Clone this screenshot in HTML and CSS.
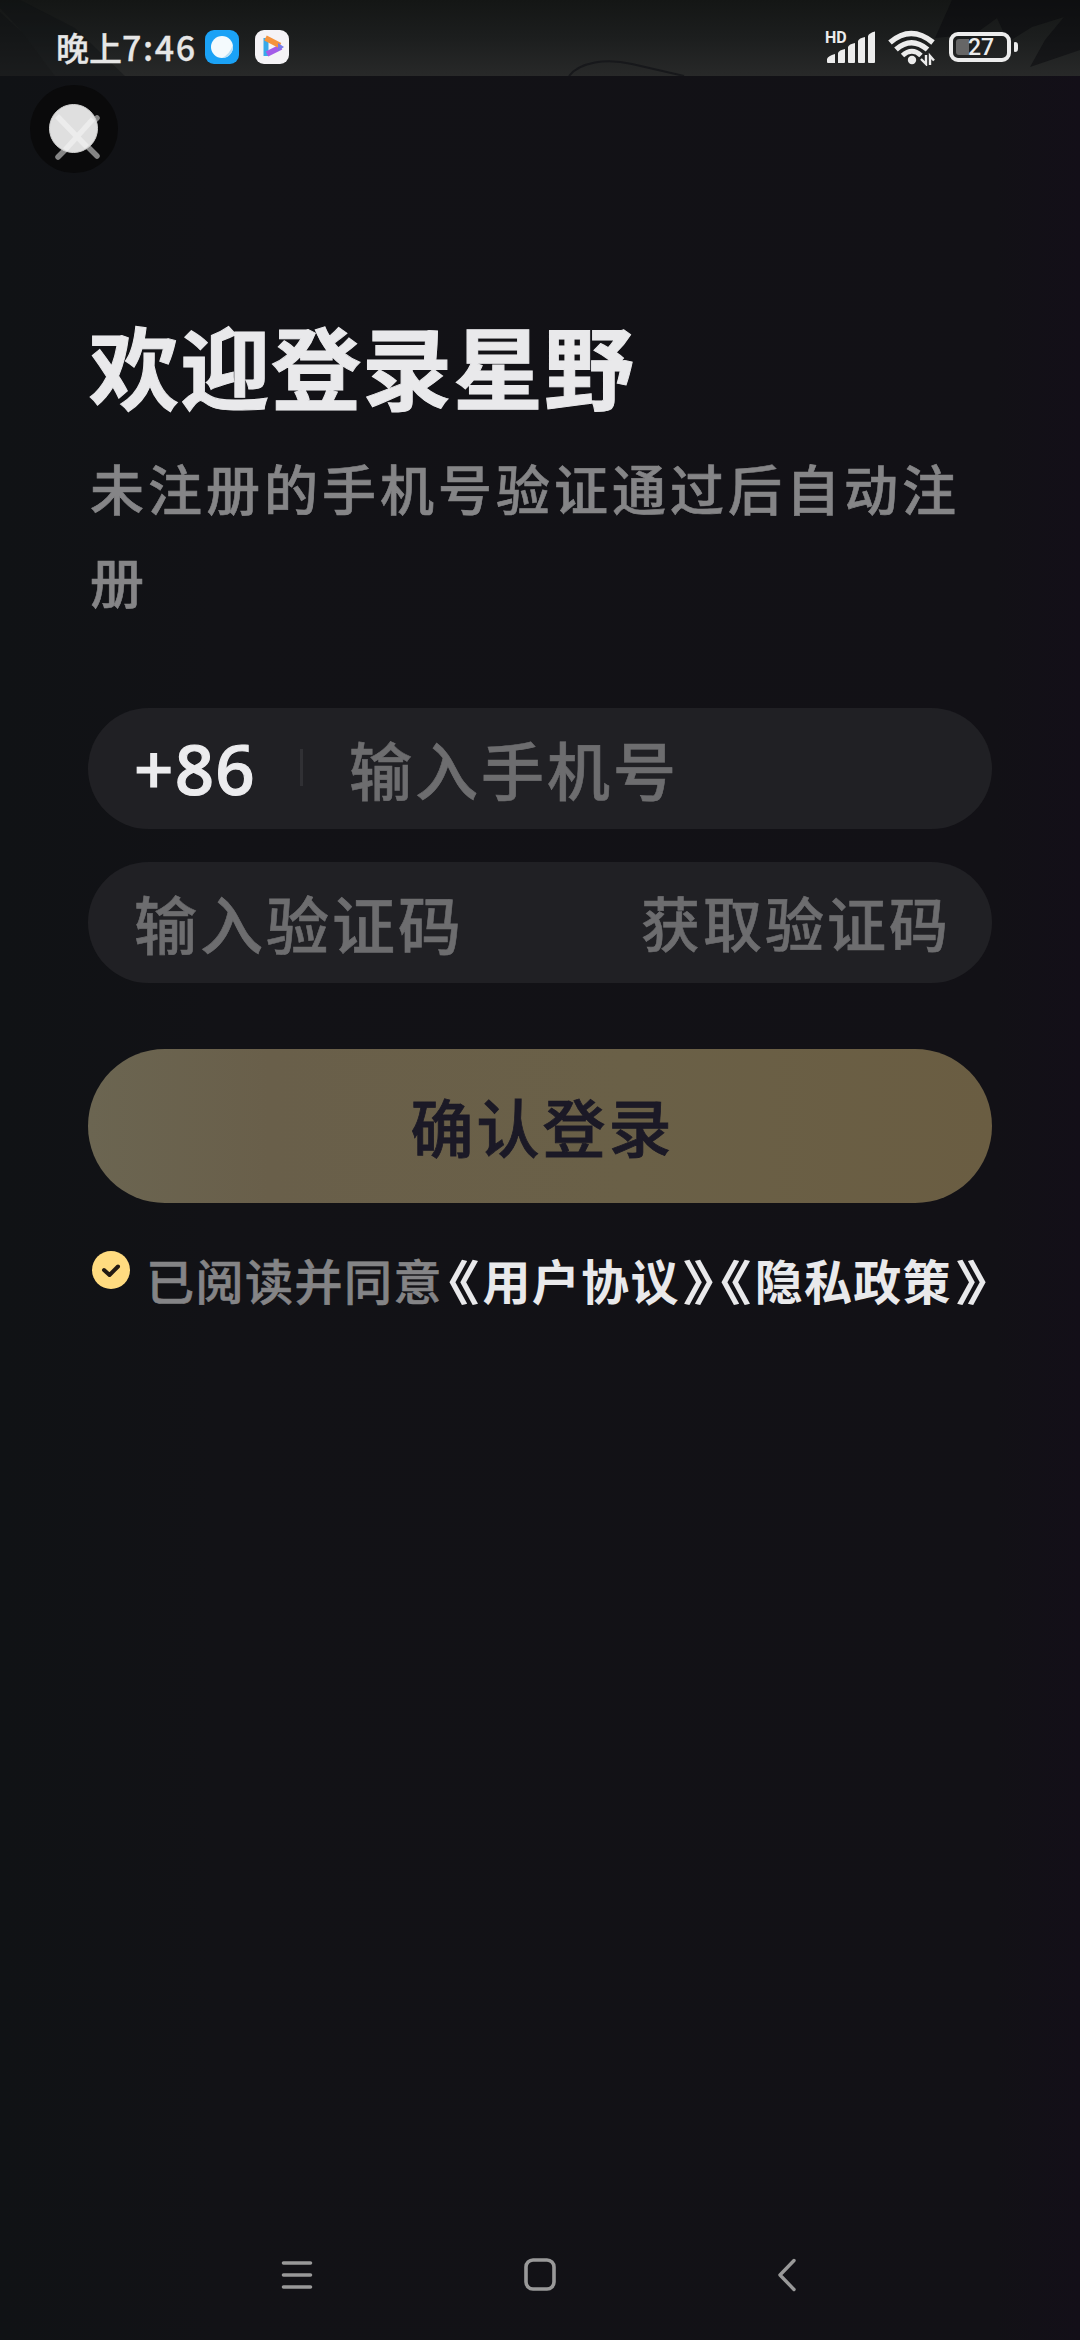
FILE: index.html
```html
<!DOCTYPE html>
<html lang="zh-CN">
<head>
<meta charset="utf-8">
<title>登录</title>
<link rel="stylesheet" href="styles.css">
</head>
<body>
<div class="screen">
  <header class="status">
    <svg class="status-art" width="1080" height="76" viewBox="0 0 1080 76" aria-hidden="true">
      <path d="M0 0H20L75 28L125 76H55L22 32L0 8Z" fill="#0c0d10" opacity=".35"/>
      <path d="M0 12L22 32L55 76H0Z" fill="#0e0f12" opacity=".5"/>
      <path d="M952 0H1080V50L1030 67L1045 40L1064 17L1032 27L1008 42L997 18L975 34L935 38Z" fill="#07080c" opacity=".5"/>
      <path d="M569 76C580 62 606 58 632 64L684 76" fill="none" stroke="#17181b" stroke-width="2"/>
    </svg>
    <span class="time">晚上<span class="digits">7:46</span></span>
    <svg class="app" width="34" height="34" viewBox="0 0 34 34">
      <rect width="34" height="34" rx="9" fill="#1ba2f6"/>
      <circle cx="17" cy="17" r="11" fill="#f4fafd"/>
      <path d="M27.800 15A11 11 0 0 1 17 28Q25 24 27.800 15Z" fill="#b9dff4"/>
    </svg>
    <svg class="app app-video" width="34" height="34" viewBox="0 0 34 34">
      <rect width="34" height="34" rx="9" fill="#f5f3f6"/>
      <path d="M11 8V26" stroke="#38a9ea" stroke-width="5"/>
      <path d="M12 24L26 17" stroke="#a45be8" stroke-width="5.500" stroke-linejoin="round"/>
      <path d="M10.500 8L25 15.500" stroke="#f5933d" stroke-width="5.500"/>
      <path d="M23 13L29 17L23 21Z" fill="#7778e8"/>
    </svg>
    <span class="spacer"></span>
    <span class="signal">
      <span class="hd">HD</span>
      <svg width="51" height="34" viewBox="0 0 51 34" fill="#ececec">
        <path d="M2 33V29Q3 26 10 24V33Q10 33 9 33H3Q2 33 2 32Z"/>
        <path d="M13 33V23Q14 20 20 19V32Q20 33 19 33Z"/>
        <path d="M23 32V17Q24 14 30 13V32Q30 33 29 33H24Q23 33 23 32Z"/>
        <path d="M33 32V11Q34 8 40 7V32Q40 33 39 33H34Q33 33 33 32Z"/>
        <path d="M43 32V6Q44 3 50 1.500V32Q50 33 49 33H44Q43 33 43 32Z"/>
      </svg>
    </span>
    <svg class="wifi" width="48" height="36" viewBox="0 0 48 36" fill="none" stroke="#ececec" stroke-width="5.500">
      <path d="M2 12.500Q23 -5.500 45 12.500"/>
      <path d="M8 19.500Q23.500 6 39.500 19.500"/>
      <path d="M14.500 25.500Q24 17 33 25.500" stroke-width="5"/>
      <circle cx="24" cy="30" r="4.200" fill="#ececec" stroke="none"/>
      <path d="M38 25V34L33 29M42 35V26L46 30.500" stroke-width="2.400"/>
    </svg>
    <span class="battery"><span class="battery-body"><span class="charge"></span><span class="percent">27</span></span><span class="battery-tip"></span></span>
  </header>

  <button class="close" aria-label="关闭">
    <svg width="88" height="88" viewBox="0 0 88 88">
      <path d="M28 32L67 71M67 33L28 72" stroke="#858585" stroke-width="5.500" stroke-linecap="round"/>
      <circle cx="43.500" cy="43.500" r="24" fill="#dfdfdf"/>
      <path d="M27 31L57 62M63 34L35 65" stroke="#ececec" stroke-width="5.500"/>
      <circle cx="43.500" cy="43.500" r="24" fill="none" stroke="#d3d3d3"/>
    </svg>
  </button>

  <main class="login">
    <h1>欢迎登录星野</h1>
    <p class="hint">未注册的手机号验证通过后自动注册</p>
    <div class="field">
      <span class="prefix">+86</span><span class="divider"></span><span class="placeholder">输入手机号</span>
    </div>
    <div class="field">
      <span class="placeholder">输入验证码</span><span class="get-code">获取验证码</span>
    </div>
    <button class="submit">确认登录</button>
    <div class="agree">
      <svg class="check" width="38" height="38" viewBox="0 0 38 38">
        <circle cx="19" cy="19" r="19" fill="#ffdb80"/>
        <path d="M12 19L17.500 24L26 15.500" fill="none" stroke="#231a12" stroke-width="4" stroke-linecap="round" stroke-linejoin="round"/>
      </svg>
      <span class="agree-text">已阅读并同意</span><a class="link"><span class="mark"><span>《</span></span>用户协议<span class="mark"><span>》</span></span></a><a class="link"><span class="mark"><span>《</span></span>隐私政策<span class="mark"><span>》</span></span></a>
    </div>
  </main>

  <nav class="system-nav">
    <svg width="32" height="32" viewBox="0 0 32 32" fill="none" stroke="#999" stroke-width="3.600" stroke-linecap="round"><path d="M2.500 4H29.500M2.500 16H29.500M2.500 28H29.500"/></svg>
    <svg width="32" height="36" viewBox="0 0 32 36" fill="none" stroke="#999" stroke-width="3.600"><rect x="2" y="3" width="28" height="29" rx="7"/></svg>
    <svg width="20" height="34" viewBox="0 0 20 34" fill="none" stroke="#999" stroke-width="3.400" stroke-linecap="round" stroke-linejoin="round"><path d="M17 2.500L3 17L17 31.500"/></svg>
  </nav>
</div>
</body>
</html>
```
FILE: styles.css
```css
* { box-sizing: border-box; }
body {
  margin: 0;
  background: #121115;
  font-family: "Noto Sans CJK SC", sans-serif;
}
button { border: 0; padding: 0; font-family: inherit; }
.screen {
  width: 1080px;
  height: 2340px;
  display: flex;
  flex-direction: column;
  overflow: hidden;
  background: linear-gradient(90deg, #101215 0%, #121216 20%, #121116 92%, #130f18 100%);
}
.status {
  position: relative;
  flex: none;
  height: 76px;
  padding: 20px 62px 0 56px;
  display: flex;
  align-items: flex-start;
  background: linear-gradient(#141615, #1c1e1e 50%, #282929);
  color: #e6e6e6;
}
.status > * { position: relative; flex: none; }
.status > .status-art { position: absolute; left: 0; top: 0; }
.status > .spacer { flex: 1; }
.time {
  width: 149px;
  height: 56px;
  line-height: 54px;
  font-size: 33px;
  font-weight: 500;
  white-space: nowrap;
  -webkit-text-stroke: 0.300px currentColor;
}
.digits { font-size: 34px; letter-spacing: 1.600px; }
.app { margin-top: 10px; }
.app-video { margin-left: 16px; }
.signal { display: flex; width: 51px; margin-top: 10px; }
.hd {
  position: absolute;
  left: 0;
  top: -2px;
  font: 700 16px/20px Roboto, sans-serif;
  color: #ececec;
}
.wifi { margin: 10px 0 0 12px; }
.battery { display: flex; align-items: center; gap: 3px; margin: 12px 0 0 13px; }
.battery-body {
  width: 62px;
  height: 30px;
  padding-left: 3px;
  display: flex;
  align-items: center;
  border: 4px solid #ececec;
  border-radius: 9px;
}
.charge { width: 13px; height: 16px; border-radius: 3px 0 0 3px; background: #666; }
.percent { font: 500 23px/22px Roboto, sans-serif; color: #ececec; padding-top: 2px; margin-left: -1px; }
.battery-tip { width: 4px; height: 10px; border-radius: 1px 3px 3px 1px; background: #ececec; }
.close {
  flex: none;
  width: 88px;
  height: 88px;
  margin: 9px 0 0 30px;
  border-radius: 50%;
  background: #0a0a0b;
}
.close svg { display: block; }
.login {
  flex: 1;
  padding: 126px 88px 0;
  display: flex;
  flex-direction: column;
}
h1 {
  margin: 0 0 0 1px;
  font-size: 90px;
  line-height: 130px;
  font-weight: 700;
  letter-spacing: 1px;
  color: #e9e9eb;
  -webkit-text-stroke: 1px currentColor;
}
.hint {
  margin: 12px 0 0 2px;
  width: 890px;
  font-size: 54px;
  line-height: 93px;
  font-weight: 500;
  letter-spacing: 4px;
  color: #858587;
  -webkit-text-stroke: 0.600px currentColor;
}
.field {
  height: 121px;
  margin-bottom: 33px;
  padding: 0 41px 2px 46px;
  display: flex;
  align-items: center;
  border-radius: 61px;
  background: #202024;
  font-size: 63px;
  line-height: 119px;
  font-weight: 500;
  -webkit-text-stroke: 0.600px currentColor;
}
.hint + .field { margin-top: 81px; }
.prefix {
  width: 166px;
  padding-top: 2px;
  font-family: "Noto Sans", sans-serif;
  font-size: 69px;
  line-height: 117px;
  letter-spacing: 1.200px;
  color: #ececee;
  -webkit-text-stroke: 1.200px currentColor;
}
.divider { width: 3px; height: 37px; margin-right: 46px; background: #303034; }
.placeholder { letter-spacing: 3px; color: #6d6d6f; }
.get-code { margin-left: auto; font-size: 59px; letter-spacing: 3px; color: #6d6d6f; }
.submit {
  height: 154px;
  margin-top: 33px;
  padding: 0 0 3px 5px;
  border-radius: 77px;
  background: linear-gradient(90deg, #6b6551, #695f4a 20%, #6a6047 60%, #6a5d42);
  font-size: 63px;
  line-height: 151px;
  font-weight: 500;
  letter-spacing: 3px;
  color: #1b1926;
  -webkit-text-stroke: 0.800px currentColor;
}
.agree {
  display: flex;
  margin-top: 48px;
  padding-left: 4px;
  font-size: 48px;
  line-height: 56px;
  white-space: nowrap;
}
.check { flex: none; margin: 0 16px 0 0; }
.agree-text {
  font-weight: 500;
  color: #848486;
  letter-spacing: 1.500px;
  -webkit-text-stroke: 0.600px currentColor;
}
.link { display: flex; font-weight: 700; color: #e9e9eb; letter-spacing: 1.300px; }
.agree-text + .link { margin-left: 2px; }
.mark { width: 37.500px; display: flex; justify-content: center; letter-spacing: 0; }
/* Half-width book-title marks, widened to fill their cell */
.mark span { font-feature-settings: "halt"; transform: scaleX(1.300); }
.system-nav {
  flex: none;
  height: 130px;
  padding: 0 283px 0 281px;
  display: grid;
  grid-template-columns: 32px 1fr 20px;
  justify-items: center;
  align-items: center;
}
.system-nav svg:nth-child(2) { margin-right: 10px; }
```
